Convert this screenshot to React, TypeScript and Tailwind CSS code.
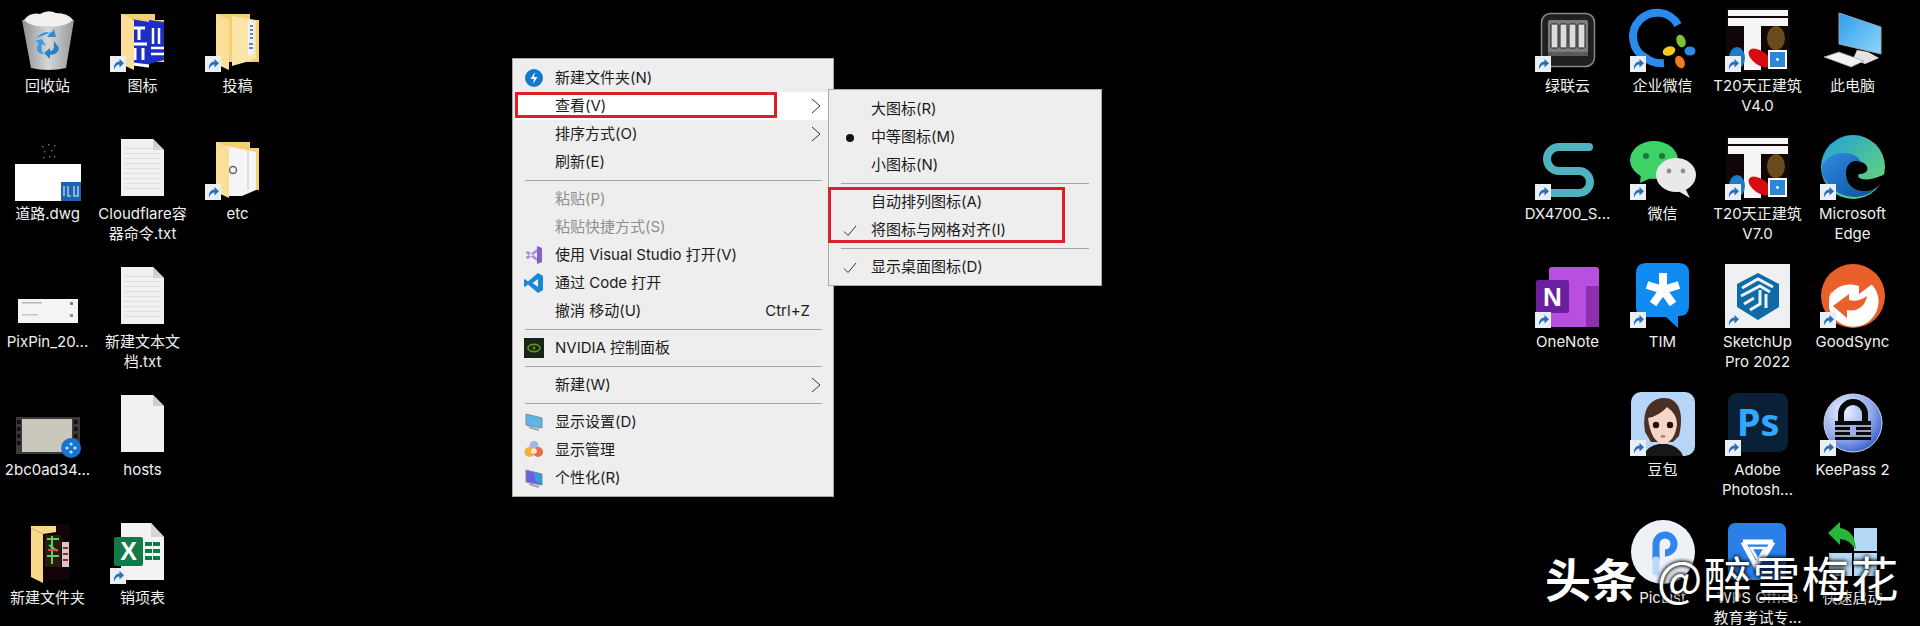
import type { ReactNode } from 'react';

const uiFont = "font-['Inter','Noto_Sans_CJK_SC',sans-serif]";

function Shortcut() {
  return (
    <svg viewBox="0 0 16 16" className="absolute left-[-1px] top-[48px] h-4 w-4">
      <rect width="16" height="16" fill="#e9eff6" />
      <path d="M4 13.5C3.5 8.5 6 5.8 9.5 5.6V3L14 7.2 9.5 11.4V8.6C7 8.7 5.4 10.4 4 13.5Z" fill="#2c6cb4" />
    </svg>
  );
}

function Svg({ children }: { children: ReactNode }) {
  return (
    <svg viewBox="0 0 64 64" className="h-16 w-16 overflow-visible">
      {children}
    </svg>
  );
}

function FolderBack({ children }: { children?: ReactNode }) {
  return (
    <Svg>
      <path d="M10 6H44V12H53V54H23L10 56Z" fill="#f4cf73" />
      {children}
      <path d="M10 6L23 12V62L10 56Z" fill="#fbdf97" />
    </Svg>
  );
}

function TextFile({ lines = true }: { lines?: boolean }) {
  const ys = [12, 17, 22, 27, 32, 37, 42, 47, 52];
  return (
    <Svg>
      <path d="M10 3H42L53 14V60H10Z" fill="#f1f1f1" />
      <path d="M42 3V14H53Z" fill="#cfcfcf" />
      {lines && ys.map((y) => <rect key={y} x="13" y={y} width="37" height="1" fill="#e0e0e0" />)}
    </Svg>
  );
}

const RecycleBin = () => (
  <Svg>
    <defs>
      <linearGradient id="bin" x1="0" x2="1">
        <stop offset="0" stopColor="#8d9194" />
        <stop offset="0.5" stopColor="#d5d7d9" />
        <stop offset="1" stopColor="#95999c" />
      </linearGradient>
    </defs>
    <path d="M6 12L58 12 50 60Q32 64 15 60Z" fill="url(#bin)" />
    <path d="M8 12Q14 4 24 6 32 1 40 5 52 5 57 12 48 20 32 18 16 20 8 12Z" fill="#f0f0f0" />
    <path d="M20 30Q28 22 34 25L31 29 40 29 38 21 36 24" fill="#2f8fd6" />
    <path d="M38 33L43 40Q42 47 34 47V51L28 45 34 40V43Q38 43 38 38Z" fill="#2a7fc6" />
    <path d="M26 31L30 38 26 36Q24 42 28 46 21 46 21 40 21 37 23 35L19 33Z" fill="#3b9ae0" />
  </Svg>
);

const IconsFolder = () => (
  <FolderBack>
    <path d="M14 10L38 14V60L14 56Z" fill="#1c2fc4" />
    <path d="M38 12L53 14V52L38 56Z" fill="#1c2fc4" />
    <path d="M22 20H34M28 20V32M20 36H36M24 40V52M32 40V52M22 56L38 58" stroke="#fff" strokeWidth="3" fill="none" />
    <path d="M42 20V36M48 20V36M40 40H53M40 46H53" stroke="#fff" strokeWidth="2.5" fill="none" />
  </FolderBack>
);

const PostFolder = () => (
  <FolderBack>
    <path d="M26 8L50 12V50L40 54 26 58Z" fill="#fbe5a8" />
    <path d="M42 12L48 14V46L42 48Z" fill="#eef1f5" />
    <path d="M44 18H47M44 22H47M44 26H47M44 30H47M43 36H47M43 40H47" stroke="#39689c" strokeWidth="1.6" />
  </FolderBack>
);

const EtcFolder = () => (
  <FolderBack>
    <path d="M20 10L50 16V54L36 60 20 60Z" fill="#f5f5f5" />
    <path d="M42 14V54" stroke="#c8c8c8" />
    <circle cx="27" cy="34" r="3.5" fill="none" stroke="#666" strokeWidth="1.5" />
  </FolderBack>
);

const DwgThumb = () => (
  <Svg>
    {[[26, 10], [32, 8], [38, 9], [28, 15], [35, 14], [27, 21], [33, 20], [38, 20]].map(([x, y]) => (
      <rect key={`${x}-${y}`} x={x} y={y} width="1.4" height="1.4" fill="#777" />
    ))}
    <rect x="-1" y="28" width="66" height="37" fill="#fff" />
    <rect x="45" y="46" width="20" height="19" fill="#1f63b0" />
    <path d="M48 50V60M52 50V60H55M58 50V60H62V50" stroke="#9cc4ea" strokeWidth="1.6" fill="none" />
  </Svg>
);

const PixPinThumb = () => (
  <Svg>
    <rect x="2" y="35" width="60" height="24" fill="#f4f4f4" />
    <rect x="6" y="38" width="20" height="1.5" fill="#b9b9b9" />
    <rect x="6" y="50" width="16" height="1.5" fill="#c7c7c7" />
    <rect x="54" y="38" width="3" height="3" fill="#b86a6a" />
    <rect x="54" y="50" width="3" height="3" fill="#8a8a8a" />
  </Svg>
);

const VideoThumb = () => (
  <Svg>
    <rect x="0" y="25" width="64" height="37" fill="#3a3a3a" />
    <rect x="6" y="27" width="50" height="33" fill="#cbc7bd" />
    {[28, 35, 42, 49].map((y) => (
      <g key={y}>
        <rect x="1" y={y} width="3.5" height="4" fill="#111" />
        <rect x="58" y={y} width="3.5" height="4" fill="#111" />
      </g>
    ))}
    <circle cx="55" cy="56" r="10" fill="#1676d2" />
    {[[55, 52], [51, 56], [59, 56], [55, 60]].map(([x, y]) => (
      <circle key={`${x}-${y}`} cx={x} cy={y} r="1.6" fill="#bfe0fa" />
    ))}
  </Svg>
);

const CadFolder = () => (
  <Svg>
    <rect x="14" y="4" width="40" height="56" fill="#120406" />
    <path d="M15 6H40V12L27 14 15 8Z" fill="#f8d98b" />
    <path d="M15 8L27 14V63L15 57Z" fill="#f8d98b" />
    <rect x="29" y="15" width="16" height="32" fill="#2a1a10" />
    <path d="M31 19H43M33 25L41 31M31 36H43M36 16V44" stroke="#5fce63" strokeWidth="2" />
    <path d="M32 30H42" stroke="#e24a4a" strokeWidth="2" />
    <rect x="46" y="22" width="7" height="25" fill="#d6c6c6" />
    <path d="M47 28H52M47 34H52M47 40H52" stroke="#a3202a" strokeWidth="2" />
  </Svg>
);

const ExcelFile = () => (
  <Svg>
    <path d="M10 3H40L53 17V60H10Z" fill="#f3f3f3" />
    <path d="M40 3V17H53Z" fill="#d6d6d6" />
    <rect x="3" y="17" width="29" height="29" rx="2" fill="#127a47" />
    <text x="17.5" y="40" fill="#fff" fontSize="25" fontWeight="700" textAnchor="middle" fontFamily="Liberation Sans">X</text>
    <path d="M34 24H50M34 31H50M34 38H50" stroke="#127a47" strokeWidth="4" strokeDasharray="7 1" />
  </Svg>
);

const Nas = () => (
  <Svg>
    <rect x="5.5" y="5.5" width="53" height="53" rx="9" fill="#202020" stroke="#8a8a8a" strokeWidth="1.5" />
    <rect x="12" y="12" width="40" height="36" rx="2" fill="#7d7d7d" />
    {[15, 24, 33, 42].map((x) => (
      <rect key={x} x={x} y="16" width="7" height="24" rx="1" fill="#dcdcdc" stroke="#222" />
    ))}
    <rect x="12" y="44" width="40" height="4" fill="#5b5b5b" />
  </Svg>
);

const WeCom = () => (
  <Svg>
    <path d="M47 17A24 24 0 1 0 15 50Q22 56 33 55" fill="none" stroke="#2a8bec" strokeWidth="8" />
    <ellipse cx="50" cy="33" rx="4.5" ry="6.5" fill="#7fc23a" transform="rotate(-20 50 33)" />
    <ellipse cx="38" cy="43" rx="6.5" ry="4.5" fill="#f6c91c" transform="rotate(-20 38 43)" />
    <ellipse cx="59" cy="43" rx="5.5" ry="4.5" fill="#2a8bec" />
    <ellipse cx="49" cy="54" rx="4.5" ry="6.5" fill="#ed7b20" transform="rotate(-25 49 54)" />
  </Svg>
);

const T20 = () => (
  <Svg>
    <rect width="64" height="64" fill="#100808" />
    <rect x="2" y="2" width="60" height="6" fill="#f5f5f5" />
    <rect x="2" y="10" width="60" height="8" fill="#f5f5f5" />
    <rect x="18" y="18" width="17" height="44" fill="#f5f5f5" />
    <ellipse cx="50" cy="30" rx="9" ry="12" fill="#6b4a1d" />
    <ellipse cx="11" cy="50" rx="8" ry="11" fill="#1e7bc4" />
    <ellipse cx="34" cy="50" rx="13" ry="7" fill="#d40d12" transform="rotate(35 34 50)" />
    <rect x="43" y="43" width="17" height="17" fill="#2f86d4" stroke="#fff" strokeWidth="2" />
    <circle cx="51.5" cy="51.5" r="1.4" fill="#fff" />
  </Svg>
);

const ThisPC = () => (
  <Svg>
    <defs>
      <linearGradient id="screen" x1="0" y1="0" x2="1" y2="1">
        <stop offset="0" stopColor="#2f9cec" />
        <stop offset="1" stopColor="#8fd8f8" />
      </linearGradient>
    </defs>
    <path d="M18 5L60 19V46L18 36Z" fill="url(#screen)" stroke="#9aa7b1" />
    <path d="M36 42L47 44 58 50 44 56 32 51Z" fill="#e4e4e4" />
    <path d="M3 49L18 44 43 53 30 59Z" fill="#f2f2f2" stroke="#9a9a9a" strokeDasharray="2 1" />
  </Svg>
);

const DxS = () => (
  <Svg>
    <path d="M53 11H23A12 12 0 0 0 23 35H43A11 11 0 0 1 43 57H16" fill="none" stroke="#4fb2c1" strokeWidth="8" strokeLinecap="round" />
  </Svg>
);

const WeChat = () => (
  <Svg>
    <ellipse cx="23" cy="24" rx="24" ry="19" fill="#3ed166" />
    <path d="M10 38L9 47 20 42Z" fill="#3ed166" />
    <circle cx="15" cy="20" r="3" fill="#137a3a" />
    <circle cx="31" cy="20" r="3" fill="#137a3a" />
    <ellipse cx="45" cy="39" rx="20" ry="17" fill="#e9e9e9" />
    <path d="M54 52L59 62 47 55Z" fill="#e9e9e9" />
    <circle cx="38" cy="35" r="2.4" fill="#8f8f8f" />
    <circle cx="52" cy="35" r="2.4" fill="#8f8f8f" />
  </Svg>
);

const Edge = () => (
  <Svg>
    <defs>
      <linearGradient id="edgeTop" x1="0" y1="0" x2="1" y2="1">
        <stop offset="0" stopColor="#1f9fdc" />
        <stop offset="1" stopColor="#6fdc6b" />
      </linearGradient>
      <linearGradient id="edgeLow" x1="0" y1="0" x2="1" y2="1">
        <stop offset="0" stopColor="#2f8be0" />
        <stop offset="1" stopColor="#0d4fa2" />
      </linearGradient>
    </defs>
    <circle cx="32" cy="31" r="32" fill="url(#edgeTop)" />
    <path d="M0 34C4 14 34 12 40 26 30 22 22 30 26 44 30 56 46 58 55 52 44 66 10 66 0 34Z" fill="url(#edgeLow)" />
    <path d="M40 26C48 28 50 38 38 38 34 42 44 48 64 38 62 46 58 50 55 52 46 58 30 56 26 44 22 30 30 22 40 26Z" fill="#000" />
  </Svg>
);

const OneNote = () => (
  <Svg>
    <rect x="13" y="3" width="50" height="60" rx="3" fill="#b84fe0" />
    <rect x="50" y="22" width="13" height="41" fill="#8f2eb0" />
    <rect x="0" y="16" width="33" height="33" rx="2" fill="#6a1f9e" />
    <text x="16.5" y="42" fill="#fff" fontSize="26" fontWeight="700" textAnchor="middle" fontFamily="Liberation Sans">N</text>
  </Svg>
);

const Tim = () => (
  <Svg>
    <path d="M15 -1H48Q58 -1 58 9V42Q58 52 48 52H47V64L35 53H15Q5 53 5 43V9Q5 -1 15 -1Z" fill="#0f8bf2" />
    <path d="M32 9V26M32 26L48 21M32 26L42 40M32 26L22 40M32 26L16 21" stroke="#fff" strokeWidth="8" />
  </Svg>
);

const SketchUp = () => (
  <Svg>
    <rect x="-1" y="0" width="65" height="64" fill="#edf1f4" />
    <path d="M32 9L53 20V43L32 56 11 43V20Z" fill="#0f6aa6" />
    <path d="M16 24L32 15 47 23M15 32L34 22 44 28M18 40L28 34M24 46L34 40V26M40 30V44" stroke="#edf1f4" strokeWidth="3" fill="none" />
  </Svg>
);

const GoodSync = () => (
  <Svg>
    <circle cx="32" cy="32" r="32" fill="#e9602b" />
    <path d="M8 34C14 12 38 8 52 22 62 34 58 52 44 60 30 67 12 60 8 44Z" fill="#fff" />
    <path d="M10 30C12 16 24 8 38 12V4L54 18 38 30V22C26 18 16 22 10 30Z" fill="#e9602b" />
    <path d="M46 32C44 44 34 48 26 46V54L12 42 28 30V36C34 38 40 36 46 32Z" fill="#e9602b" />
  </Svg>
);

const Doubao = () => (
  <Svg>
    <rect x="0" y="0" width="64" height="64" rx="10" fill="#b6d5f7" />
    <path d="M14 40C10 14 22 6 33 6 46 6 54 18 48 44L42 50H20Z" fill="#4a2f27" />
    <path d="M17 26Q28 24 36 15 46 22 46 32 44 50 32 52 20 50 17 26Z" fill="#f6d6c6" />
    <circle cx="25" cy="33" r="3.2" fill="#1a1110" />
    <circle cx="39" cy="33" r="3.2" fill="#1a1110" />
    <path d="M30 44Q32 45 34 44" stroke="#d2605e" strokeWidth="2" fill="none" />
    <path d="M12 64Q16 54 28 52H36Q48 54 52 64Z" fill="#17171a" />
  </Svg>
);

const Photoshop = () => (
  <Svg>
    <rect x="2" y="1" width="60" height="59" rx="9" fill="#0a2036" />
    <text x="32" y="44" fill="#31a8ff" fontSize="38" fontWeight="700" textAnchor="middle" fontFamily="Open Sans">Ps</text>
  </Svg>
);

const KeePass = () => (
  <Svg>
    <defs>
      <radialGradient id="kp" cx="0.35" cy="0.3" r="0.8">
        <stop offset="0" stopColor="#eef2ff" />
        <stop offset="0.6" stopColor="#8fa8ea" />
        <stop offset="1" stopColor="#2c50c8" />
      </radialGradient>
    </defs>
    <circle cx="32" cy="31" r="29" fill="url(#kp)" stroke="#ced6ee" />
    <path d="M20 30V22A12 12 0 0 1 44 22V30" fill="none" stroke="#06070d" strokeWidth="6" />
    <rect x="14" y="29" width="36" height="19" fill="#06070d" />
    <path d="M14 34H50M14 39H50M14 44H50" stroke="#cfd8f2" strokeWidth="1.3" />
    <rect x="29" y="33" width="6" height="10" fill="#9ab0ea" />
  </Svg>
);

const PicList = () => (
  <Svg>
    <circle cx="32" cy="32" r="32" fill="#eef2f6" />
    <path d="M25 40V24A9 9 0 1 1 34 33" fill="none" stroke="#2f86ee" strokeWidth="7" />
    <path d="M25 40V52" stroke="#bcd9f7" strokeWidth="7" strokeLinecap="round" />
  </Svg>
);

const Wps = () => (
  <Svg>
    <rect x="2" y="3" width="58" height="57" rx="7" fill="#2a7fe8" />
    <path d="M17 22L30 46 36 36M47 22L36 40M17 22H47" fill="none" stroke="#fff" strokeWidth="5" />
    <path d="M25 28H39L32 40Z" fill="none" stroke="#fff" strokeWidth="2.5" />
  </Svg>
);

const ArrowTiles = () => (
  <Svg>
    <rect x="33" y="8" width="23" height="23" fill="#b3d9f6" />
    <rect x="8" y="33" width="23" height="23" fill="#b3d9f6" />
    <rect x="33" y="33" width="23" height="23" fill="#b3d9f6" />
    <path d="M7 13L19 2V8Q34 10 35 30 28 19 19 19V25Z" fill="#27b83a" />
  </Svg>
);

type DeskIcon = { label: string; icon?: ReactNode; shortcut?: boolean };

const LEFT_ICONS: DeskIcon[] = [
  { label: '回收站', icon: <RecycleBin /> },
  { label: '图标', icon: <IconsFolder />, shortcut: true },
  { label: '投稿', icon: <PostFolder />, shortcut: true },
  { label: '道路.dwg', icon: <DwgThumb /> },
  { label: 'Cloudflare容\n器命令.txt', icon: <TextFile /> },
  { label: 'etc', icon: <EtcFolder />, shortcut: true },
  { label: 'PixPin_20...', icon: <PixPinThumb /> },
  { label: '新建文本文\n档.txt', icon: <TextFile /> },
  { label: '' },
  { label: '2bc0ad34...', icon: <VideoThumb /> },
  { label: 'hosts', icon: <TextFile lines={false} /> },
  { label: '' },
  { label: '新建文件夹', icon: <CadFolder /> },
  { label: '销项表', icon: <ExcelFile />, shortcut: true },
];

const RIGHT_ICONS: DeskIcon[] = [
  { label: '绿联云', icon: <Nas />, shortcut: true },
  { label: '企业微信', icon: <WeCom />, shortcut: true },
  { label: 'T20天正建筑\nV4.0', icon: <T20 />, shortcut: true },
  { label: '此电脑', icon: <ThisPC /> },
  { label: 'DX4700_S...', icon: <DxS />, shortcut: true },
  { label: '微信', icon: <WeChat />, shortcut: true },
  { label: 'T20天正建筑\nV7.0', icon: <T20 />, shortcut: true },
  { label: 'Microsoft\nEdge', icon: <Edge />, shortcut: true },
  { label: 'OneNote', icon: <OneNote />, shortcut: true },
  { label: 'TIM', icon: <Tim />, shortcut: true },
  { label: 'SketchUp\nPro 2022', icon: <SketchUp />, shortcut: true },
  { label: 'GoodSync', icon: <GoodSync />, shortcut: true },
  { label: '' },
  { label: '豆包', icon: <Doubao />, shortcut: true },
  { label: 'Adobe\nPhotosh...', icon: <Photoshop />, shortcut: true },
  { label: 'KeePass 2', icon: <KeePass />, shortcut: true },
  { label: '' },
  { label: 'PicList', icon: <PicList /> },
  { label: 'WPS Office\n教育考试专...', icon: <Wps /> },
  { label: '快速启动', icon: <ArrowTiles /> },
];

function DesktopIcon({ item }: { item: DeskIcon }) {
  if (!item.icon) return <div />;
  return (
    <div className="flex flex-col items-center">
      <div className="relative h-16 w-16">
        {item.icon}
        {item.shortcut && <Shortcut />}
      </div>
      <div className="mt-1 w-[95px] whitespace-pre-line text-center text-[15px] leading-5 text-[#f0f0f0]">
        {item.label}
      </div>
    </div>
  );
}

const NewFolderGlyph = () => (
  <svg viewBox="0 0 20 20" className="h-5 w-5">
    <circle cx="10" cy="10" r="9" fill="#1479cf" />
    <path d="M11 4L6.5 11H10L9 16 13.5 9H10Z" fill="#fff" />
  </svg>
);

const VsGlyph = () => (
  <svg viewBox="0 0 20 20" className="h-5 w-5">
    <path d="M13 1L18 3V17L13 19Z" fill="#8661c5" />
    <path d="M2 7L4 6 13 13V16L2 8ZM2 13L4 14 13 7V4L2 12Z" fill="#a98bdc" />
  </svg>
);

const CodeGlyph = () => (
  <svg viewBox="0 0 20 20" className="h-5 w-5">
    <path d="M14 0L19 3V17L14 20 4 11.5 1 14 0 13V7L1 6 4 8.5ZM14 6L8.5 10 14 14Z" fill="#1a86d6" />
  </svg>
);

const NvidiaGlyph = () => (
  <svg viewBox="0 0 20 20" className="h-5 w-5">
    <rect width="20" height="20" fill="#16241a" />
    <ellipse cx="10" cy="10" rx="6" ry="3.6" fill="none" stroke="#5d9a1a" strokeWidth="1.6" />
    <circle cx="10" cy="10" r="1.4" fill="#5d9a1a" />
  </svg>
);

const DisplayGlyph = () => (
  <svg viewBox="0 0 20 20" className="h-5 w-5">
    <path d="M2 2L18 6V16L2 13Z" fill="#5eb5e8" stroke="#7c8b96" />
    <path d="M5 15L15 18" stroke="#9aa4ab" strokeWidth="2" />
  </svg>
);

const ManageGlyph = () => (
  <svg viewBox="0 0 20 20" className="h-5 w-5">
    <circle cx="10" cy="5.5" r="4.5" fill="#9fb6e6" />
    <circle cx="5.5" cy="12" r="5" fill="#f3b13c" />
    <circle cx="14" cy="12" r="5" fill="#ee6a4e" />
    <circle cx="10" cy="11" r="2.8" fill="#f4ead8" />
  </svg>
);

const PersonalizeGlyph = () => (
  <svg viewBox="0 0 20 20" className="h-5 w-5">
    <path d="M2 2L18 6V17L2 14Z" fill="#6a5fe0" stroke="#7c8b96" />
    <path d="M10 5L18 6V15L12 14Z" fill="#2f9fdc" />
    <path d="M5 16L15 19" stroke="#9aa4ab" strokeWidth="2" />
  </svg>
);

const Chevron = () => (
  <svg viewBox="0 0 10 16" className="ml-auto mr-2 h-4 w-2.5">
    <path d="M1 1L9 8 1 15" fill="none" stroke="#333" strokeWidth="1" />
  </svg>
);

type Row =
  | 'sep'
  | {
      label: string;
      icon?: ReactNode;
      disabled?: boolean;
      active?: boolean;
      more?: boolean;
      shortcut?: string;
    };

const MAIN_MENU: Row[] = [
  { label: '新建文件夹(N)', icon: <NewFolderGlyph /> },
  { label: '查看(V)', more: true, active: true },
  { label: '排序方式(O)', more: true },
  { label: '刷新(E)' },
  'sep',
  { label: '粘贴(P)', disabled: true },
  { label: '粘贴快捷方式(S)', disabled: true },
  { label: '使用 Visual Studio 打开(V)', icon: <VsGlyph /> },
  { label: '通过 Code 打开', icon: <CodeGlyph /> },
  { label: '撤消 移动(U)', shortcut: 'Ctrl+Z' },
  'sep',
  { label: 'NVIDIA 控制面板', icon: <NvidiaGlyph /> },
  'sep',
  { label: '新建(W)', more: true },
  'sep',
  { label: '显示设置(D)', icon: <DisplayGlyph /> },
  { label: '显示管理', icon: <ManageGlyph /> },
  { label: '个性化(R)', icon: <PersonalizeGlyph /> },
];

function MainMenu() {
  return (
    <div className="absolute left-[512px] top-[58px] h-[439px] w-[322px] border border-[#a8a8a8] bg-[#eeeeee] pb-1 pl-0.5 pr-1 pt-[5px] text-[15px] text-[#1c1c1c]">
      {MAIN_MENU.map((row, i) =>
        row === 'sep' ? (
          <div key={i} className="my-1 ml-2.5 mr-[7px] h-px bg-[#a6a6a6]" />
        ) : (
          <div key={i} className={`flex h-7 items-center ${row.active ? 'bg-white' : ''} ${row.disabled ? 'text-[#8f8f8f]' : ''}`}>
            <span className="flex w-10 shrink-0 items-center justify-center pr-0.5">{row.icon}</span>
            <span>{row.label}</span>
            {row.shortcut && <span className="ml-auto mr-[19px]">{row.shortcut}</span>}
            {row.more && <Chevron />}
          </div>
        ),
      )}
    </div>
  );
}

const CheckMark = () => (
  <svg viewBox="0 0 14 12" className="h-3 w-3.5">
    <path d="M1 6.5L5 10.5 13 1" fill="none" stroke="#333" strokeWidth="1" />
  </svg>
);

const SUB_MENU: Row[] = [
  { label: '大图标(R)' },
  { label: '中等图标(M)', icon: <span className="block h-2 w-2 rounded-full bg-[#111]" /> },
  { label: '小图标(N)' },
  'sep',
  { label: '自动排列图标(A)' },
  { label: '将图标与网格对齐(I)', icon: <CheckMark /> },
  'sep',
  { label: '显示桌面图标(D)', icon: <CheckMark /> },
];

function SubMenu() {
  return (
    <div className="absolute left-[828px] top-[89px] h-[197px] w-[274px] border border-[#a8a8a8] bg-[#eeeeee] pt-1.5 text-[15px] text-[#1c1c1c]">
      {SUB_MENU.map((row, i) =>
        row === 'sep' ? (
          <div key={i} className="mx-[12px] mb-[5px] mt-[3px] h-px bg-[#a6a6a6]" />
        ) : (
          <div key={i} className="flex h-7 items-center">
            <span className="flex w-[42px] shrink-0 items-center justify-center">{row.icon}</span>
            <span className="mb-0.5">{row.label}</span>
          </div>
        ),
      )}
    </div>
  );
}

export default function App() {
  return (
    <div className={`relative h-[626px] w-[1920px] overflow-hidden bg-black ${uiFont}`}>
      <div className="flex items-start justify-between pr-5 pt-2">
        <div className="grid grid-cols-[repeat(3,95px)] auto-rows-[128px]">
          {LEFT_ICONS.map((item, i) => (
            <DesktopIcon key={i} item={item} />
          ))}
        </div>
        <div className="grid grid-cols-[repeat(4,95px)] auto-rows-[128px]">
          {RIGHT_ICONS.map((item, i) => (
            <DesktopIcon key={i} item={item} />
          ))}
        </div>
      </div>

      <MainMenu />
      <SubMenu />

      {/* red annotation frames */}
      <div className="absolute left-[515px] top-[92px] h-[26px] w-[262px] border-[3px] border-[#d9212c]" />
      <div className="absolute left-[828px] top-[187px] h-[56px] w-[237px] border-[3px] border-[#d9212c]" />

      {/* watermark */}
      <div className="absolute left-[1545px] top-[540px] flex items-baseline whitespace-nowrap font-['Noto_Sans_CJK_SC',sans-serif] leading-[72px] text-white [text-shadow:0_0_4px_#000,0_0_4px_#000]">
        <span className="text-[46px] font-bold">头条</span>
        <span className="ml-5 text-[48px] tracking-[1px]">@醉雪梅花</span>
      </div>
    </div>
  );
}
